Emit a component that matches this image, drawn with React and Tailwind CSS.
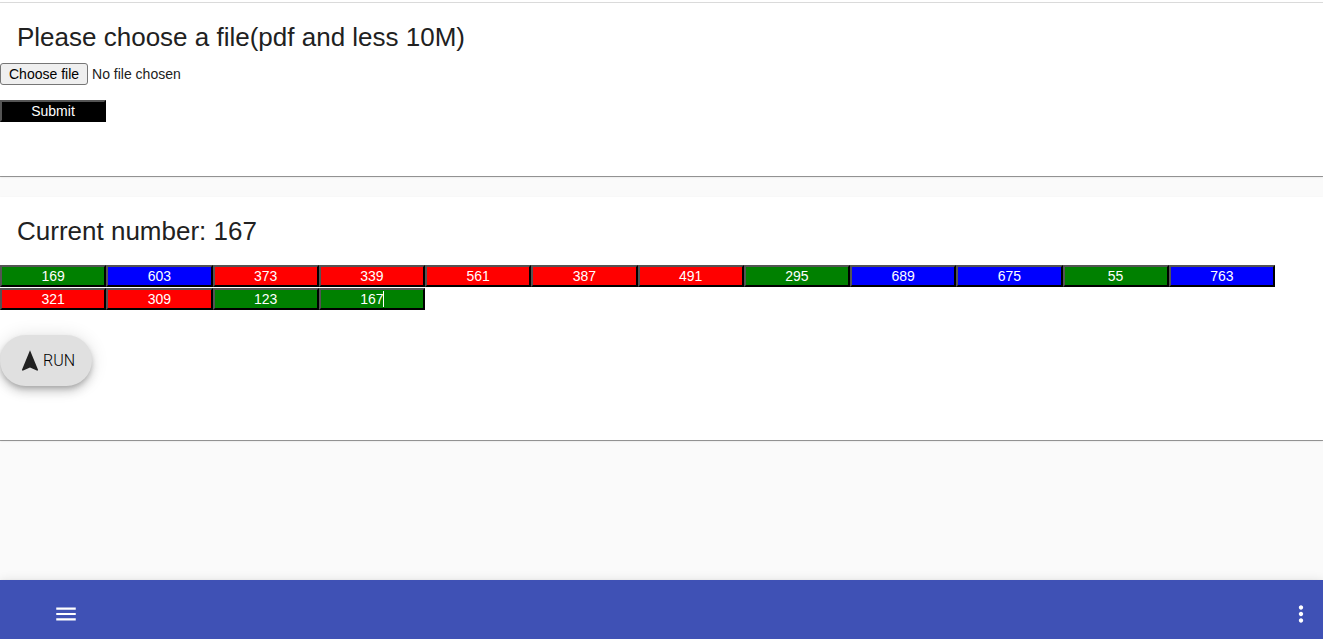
import { useState } from "react";

const TONES = {
  green: "bg-[#008000]",
  blue: "bg-[#0000ff]",
  red: "bg-[#ff0000]",
};

const NUMBERS = [
  ["169", "green"],
  ["603", "blue"],
  ["373", "red"],
  ["339", "red"],
  ["561", "red"],
  ["387", "red"],
  ["491", "red"],
  ["295", "green"],
  ["689", "blue"],
  ["675", "blue"],
  ["55", "green"],
  ["763", "blue"],
  ["321", "red"],
  ["309", "red"],
  ["123", "green"],
  ["167", "green"],
];

const BEVEL =
  "border-2 border-t-[#545454] border-l-[#545454] border-r-black border-b-black";

function Card({ title, children }) {
  return (
    <section className="bg-white pt-4 pb-[54px] shadow-[0_1px_0_rgba(0,0,0,0.36),0_1px_2px_rgba(0,0,0,0.12)]">
      <h2 className="px-[17px] text-[26px] leading-9">{title}</h2>
      {children}
    </section>
  );
}

function FilePicker() {
  const [name, setName] = useState("No file chosen");
  return (
    <label className="mt-2 flex w-fit items-center gap-1 text-sm leading-[18px]">
      <input
        type="file"
        accept="application/pdf"
        className="sr-only"
        onChange={(e) => setName(e.target.files[0]?.name ?? "No file chosen")}
      />
      <span className="rounded-[3px] border border-[#767676] bg-[#efefef] px-2 py-px text-black">
        Choose file
      </span>
      <span>{name}</span>
    </label>
  );
}

function NumberBox({ value, tone, active }) {
  return (
    <div className="relative h-[22px]">
      <input
        type="text"
        aria-label={`Number ${value}`}
        defaultValue={value}
        className={`block h-full w-full text-center text-sm leading-[18px] text-white outline-none ${BEVEL} ${TONES[tone]}`}
      />
      {active && (
        <span className="absolute top-[3px] left-1/2 ml-[11px] h-4 w-px bg-white" />
      )}
    </div>
  );
}

export default function App() {
  return (
    <div className="flex min-h-screen flex-col bg-[#fafafa] font-['Liberation_Sans',Arial,sans-serif] text-[#212121]">
      <div className="h-[3px] border-b border-[#dcdcdc] bg-white" />
      <main className="flex grow flex-col gap-[21px]">
        <Card title="Please choose a file(pdf and less 10M)">
          <FilePicker />
          <button
            type="button"
            className={`mt-[15px] block h-[22px] w-[106px] bg-black text-center text-sm leading-[18px] text-white ${BEVEL}`}
          >
            Submit
          </button>
        </Card>
        <Card title="Current number: 167">
          <div className="mt-4 grid w-[1275px] max-w-full grid-cols-12 gap-y-px">
            {NUMBERS.map(([value, tone], i) => (
              <NumberBox
                key={value}
                value={value}
                tone={tone}
                active={i === NUMBERS.length - 1}
              />
            ))}
          </div>
          <button
            type="button"
            className="mt-[25px] flex h-[51px] items-center rounded-full bg-[#e0e0e0] px-[17px] font-[Roboto,sans-serif] text-base font-light text-black shadow-[0_3px_5px_-1px_rgba(0,0,0,0.2),0_6px_10px_0_rgba(0,0,0,0.14),0_1px_18px_0_rgba(0,0,0,0.12)]"
          >
            <svg viewBox="0 0 24 24" className="size-[26px] text-[#212121]" fill="currentColor" aria-hidden="true">
              <path d="M12 2L4.5 20.29l.71.71L12 18l6.79 3 .71-.71z" />
            </svg>
            RUN
          </button>
        </Card>
      </main>
      <footer className="flex h-[59px] items-center justify-between bg-[#3f51b5] pt-2 pr-[9px] pl-[53px] text-white shadow-[0_2px_4px_-1px_rgba(0,0,0,0.2),0_4px_5px_0_rgba(0,0,0,0.14),0_1px_10px_0_rgba(0,0,0,0.12)]">
        <button type="button" aria-label="Open menu">
          <svg viewBox="0 0 24 24" className="block size-[26px]" fill="currentColor" aria-hidden="true">
            <path d="M3 18h18v-2H3v2zm0-5h18v-2H3v2zm0-7v2h18V6H3z" />
          </svg>
        </button>
        <button type="button" aria-label="More options">
          <svg viewBox="0 0 24 24" className="block size-[26px]" fill="currentColor" aria-hidden="true">
            <path d="M12 8c1.1 0 2-.9 2-2s-.9-2-2-2-2 .9-2 2 .9 2 2 2zm0 2c-1.1 0-2 .9-2 2s.9 2 2 2 2-.9 2-2-.9-2-2-2zm0 6c-1.1 0-2 .9-2 2s.9 2 2 2 2-.9 2-2-.9-2-2-2z" />
          </svg>
        </button>
      </footer>
    </div>
  );
}
